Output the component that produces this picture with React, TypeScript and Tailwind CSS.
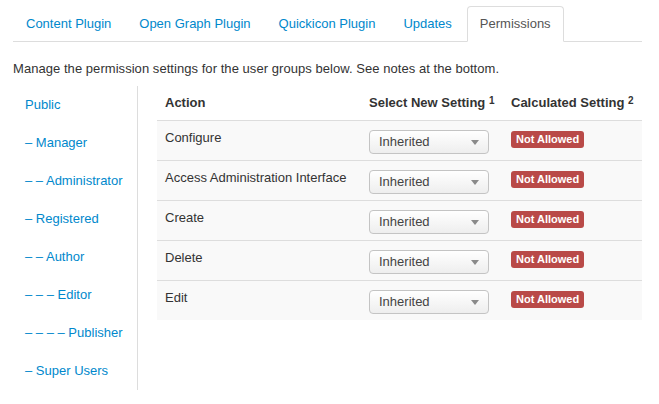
import React from 'react';

const TABS = ['Content Plugin', 'Open Graph Plugin', 'Quickicon Plugin', 'Updates', 'Permissions'];
const ACTIVE_TAB = 'Permissions';

const GROUPS = [
  'Public',
  '– Manager',
  '– – Administrator',
  '– Registered',
  '– – Author',
  '– – – Editor',
  '– – – – Publisher',
  '– Super Users',
];

const ACTIONS = ['Configure', 'Access Administration Interface', 'Create', 'Delete', 'Edit'];

const FakeSelect: React.FC = () => (
  <div className="mt-px flex h-[24px] w-[120px] items-center justify-between rounded-[4px] border border-[#c4c4c4] bg-gradient-to-b from-white to-[#eeeeee] pl-[9px] pr-[8px] text-[13px] text-[#444]">
    <span>Inherited</span>
    <svg width="8" height="5" viewBox="0 0 8 5" className="mr-[1px]">
      <path d="M0 0 L8 0 L4 5 Z" fill="#8a8a8a" />
    </svg>
  </div>
);

export default function App() {
  return (
    <div
      className="min-h-screen w-[659px] bg-white pl-[13px] pr-[17px] text-[13px] leading-[18px] text-[#333]"
      style={{ fontFamily: '"Liberation Sans", Arial, sans-serif' }}
    >
      {/* Tabs */}
      <ul className="flex border-b border-[#ddd] pt-[6px]">
        {TABS.map((tab) => (
          <li key={tab} className="-mb-px mr-[2px]">
            {tab === ACTIVE_TAB ? (
              <span className="block rounded-t-[4px] border border-[#ddd] border-b-white bg-white px-[12px] py-[8px] text-[#555]">
                {tab}
              </span>
            ) : (
              <span className="block border border-transparent px-[12px] py-[8px] text-[#0088cc]">
                {tab}
              </span>
            )}
          </li>
        ))}
      </ul>

      <p className="mt-[18px] mb-[7px] tracking-[0.05px]">Manage the permission settings for the user groups below. See notes at the bottom.</p>

      <div className="flex">
        {/* Group list */}
        <ul className="mt-px w-[125px] shrink-0 border-r border-[#ddd]">
          {GROUPS.map((g) => (
            <li key={g} className="flex h-[38px] items-center pl-[12px] text-[#0088cc]">
              {g}
            </li>
          ))}
        </ul>

        {/* Permissions table */}
        <div className="ml-[19px] mt-px flex-1">
          <table className="w-full border-collapse text-left">
            <thead>
              <tr>
                <th className="w-[204px] whitespace-nowrap px-[8px] py-[8px] align-top font-bold">Action</th>
                <th className="w-[142px] whitespace-nowrap px-[8px] py-[8px] align-top font-bold">
                  Select New Setting <sup className="relative -top-[3px] text-[10px]">1</sup>
                </th>
                <th className="whitespace-nowrap px-[8px] py-[8px] align-top font-bold">
                  Calculated Setting <sup className="relative -top-[3px] text-[10px]">2</sup>
                </th>
              </tr>
            </thead>
            <tbody>
              {ACTIONS.map((a) => (
                <tr key={a} className="border-t border-[#ddd] bg-[#f9f9f9]">
                  <td className="px-[8px] pt-[8px] pb-[6px] align-top">{a}</td>
                  <td className="px-[8px] pt-[8px] pb-[6px] align-top">
                    <FakeSelect />
                  </td>
                  <td className="px-[8px] pt-[8px] pb-[6px] align-top">
                    <span className="mt-[2px] inline-block rounded-[3px] bg-[#b94a48] px-[5px] text-[11px] font-bold leading-[17px] text-white">
                      Not Allowed
                    </span>
                  </td>
                </tr>
              ))}
            </tbody>
          </table>
        </div>
      </div>
    </div>
  );
}
